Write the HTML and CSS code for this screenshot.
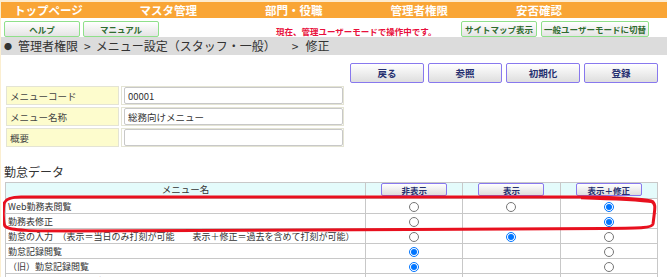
FILE: index.html
```html
<!DOCTYPE html>
<html lang="ja">
<head>
    <meta charset="UTF-8">
    <title>メニュー設定</title>
    <link rel="stylesheet" href="styles.css">
</head>
<body>
    <div id="page">
        <div class="topnav">
            <span>トップページ</span>
            <span>マスタ管理</span>
            <span>部門・役職</span>
            <span>管理者権限</span>
            <span>安否確認</span>
        </div>
        <div class="toolbar">
            <button class="green-btn">ヘルプ</button>
            <button class="green-btn">マニュアル</button>
            <span class="mode-note">現在、管理ユーザーモードで操作中です。</span>
            <div class="toolbar-right">
                <button class="green-btn">サイトマップ表示</button>
                <button class="green-btn wide">一般ユーザーモードに切替</button>
            </div>
        </div>
        <div class="breadcrumb">
            <span class="dot">●</span>管理者権限<span class="sep">&gt;</span>メニュー設定（スタッフ・一般）<span class="sep wide">&gt;</span>修正
        </div>

        <div class="actions">
            <button class="btn">戻る</button>
            <button class="btn">参照</button>
            <button class="btn">初期化</button>
            <button class="btn">登録</button>
        </div>

        <table class="form">
            <tr>
                <td class="label">メニューコード</td>
                <td class="field"><input type="text" value="00001"></td>
            </tr>
            <tr>
                <td class="label">メニュー名称</td>
                <td class="field"><input type="text" value="総務向けメニュー"></td>
            </tr>
            <tr>
                <td class="label">概要</td>
                <td class="field"><input type="text" value=""></td>
            </tr>
        </table>

        <h2 class="section">勤怠データ</h2>

        <div class="data-wrap">
            <table class="data">
                <tr class="head">
                    <th class="name">メニュー名</th>
                    <th><button class="btn small">非表示</button></th>
                    <th><button class="btn small">表示</button></th>
                    <th><button class="btn small">表示＋修正</button></th>
                </tr>
                <tr>
                    <td>Web勤務表閲覧</td>
                    <td><input type="radio" name="r1"></td>
                    <td><input type="radio" name="r1"></td>
                    <td><input type="radio" name="r1" checked></td>
                </tr>
                <tr>
                    <td>勤務表修正</td>
                    <td><input type="radio" name="r2"></td>
                    <td></td>
                    <td><input type="radio" name="r2" checked></td>
                </tr>
                <tr>
                    <td>勤怠の入力　（表示＝当日のみ打刻が可能　　表示＋修正＝過去を含めて打刻が可能）</td>
                    <td><input type="radio" name="r3"></td>
                    <td><input type="radio" name="r3" checked></td>
                    <td><input type="radio" name="r3"></td>
                </tr>
                <tr>
                    <td>勤怠記録閲覧</td>
                    <td><input type="radio" name="r4" checked></td>
                    <td></td>
                    <td><input type="radio" name="r4"></td>
                </tr>
                <tr>
                    <td>（旧）勤怠記録閲覧</td>
                    <td><input type="radio" name="r5" checked></td>
                    <td></td>
                    <td><input type="radio" name="r5"></td>
                </tr>
                <tr>
                    <td>　　　　　勤怠入力（打刻）</td>
                    <td><input type="radio" name="r6" checked></td>
                    <td></td>
                    <td><input type="radio" name="r6"></td>
                </tr>
            </table>

            <!-- 手書きの赤枠 -->
            <svg class="mark" width="660" height="45" viewBox="0 0 660 45">
                <path d="M18 3 L580 3 C610 3 640 5 648 7 C653 9 652 14 651 22 L650 30 C649 34 640 34 600 34.5 L70 37 C30 37 6 37 2 32 C0 28 0 16 1 10 C2 5 8 3 18 3 Z" fill="none" stroke="#e8101e" stroke-width="3" stroke-linejoin="round"/>
                <path d="M578 4 C610 5 635 6 651 8" fill="none" stroke="#e8101e" stroke-width="2.5"/>
            </svg>
        </div>
    </div>
</body>
</html>
```

FILE: styles.css
```css
body {
    margin: 0;
    font-family: "Noto Sans CJK JP", "Noto Sans", sans-serif;
    color: #333;
    background-color: #fff;
}
#page {
    width: 666px;
    height: 277px;
    overflow: hidden;
    border-left: 1px solid #fbeed0;
}
.topnav {
    display: flex;
    height: 16px;
    border-top: 2px solid #fdebcf;
    background-color: #f9a535;
}
.topnav span {
    width: 125.5px;
    flex: none;
    padding-left: 13px;
    box-sizing: border-box;
    color: #fff;
    font-size: 11.5px;
    font-weight: bold;
    line-height: 16px;
}
.toolbar {
    display: flex;
    align-items: flex-start;
    height: 19px;
    padding: 3px 18px 0 3px;
    box-sizing: border-box;
}
.green-btn {
    width: 76px;
    height: 16px;
    margin-right: 3px;
    padding: 0;
    border: 1px solid #8fe08a;
    border-radius: 2px;
    background: linear-gradient(#ffffff, #e4e4e4);
    color: #2f6b2f;
    font-family: inherit;
    font-size: 8.5px;
    font-weight: bold;
    line-height: 13px;
}
.green-btn.wide {
    width: 108px;
    margin-right: 0;
}
.mode-note {
    margin-left: 114px;
    padding-top: 5px;
    color: #e8103c;
    font-size: 8.5px;
    font-weight: bold;
    line-height: 10px;
}
.toolbar-right {
    display: flex;
    margin-left: auto;
    gap: 1px;
}
.breadcrumb {
    height: 18px;
    padding-left: 3px;
    background-color: #dcdcdc;
    font-size: 12px;
    line-height: 18px;
    color: #333;
    white-space: nowrap;
}
.breadcrumb .dot {
    font-size: 8px;
    margin-right: 6px;
    vertical-align: 1px;
}
.breadcrumb .sep {
    margin: 0 5px 0 6px;
}
.breadcrumb .sep.wide {
    margin: 0 7px 0 16px;
}
.actions {
    display: flex;
    justify-content: flex-end;
    gap: 4px;
    padding: 8px 9px 0 0;
}
.btn {
    width: 74px;
    height: 20px;
    padding: 0;
    border: 1px solid #8878ee;
    border-radius: 2px;
    background: linear-gradient(#ffffff, #dedede);
    color: #263070;
    font-family: inherit;
    font-size: 9.5px;
    font-weight: bold;
}
.btn.small {
    width: 66px;
    height: 13px;
    font-size: 8.5px;
    line-height: 10px;
    vertical-align: top;
}
.form {
    margin: 1px 0 0 3px;
    border-collapse: separate;
    border-spacing: 2px;
}
.form td {
    height: 19px;
    padding: 0;
    box-sizing: border-box;
    border: 1px solid #e4e4d4;
    font-size: 9.5px;
}
.form .label {
    width: 113px;
    padding-left: 3px;
    background-color: #fdfccd;
    color: #444;
}
.form .field {
    width: 223px;
    padding-left: 2px;
}
.form input {
    width: 219px;
    height: 17px;
    box-sizing: border-box;
    border: 1px solid #c8c8c8;
    border-radius: 2px;
    padding: 0 3px;
    font-family: inherit;
    font-size: 9.5px;
    color: #333;
    display: block;
}
.section {
    margin: 14px 0 0 3px;
    font-size: 12px;
    font-weight: normal;
    line-height: 18px;
    color: #333;
}
.data-wrap {
    position: relative;
    margin: 1px 0 0 4px;
}
.data {
    width: 653px;
    border-collapse: collapse;
    table-layout: fixed;
}
.data th,
.data td {
    height: 14px;
    padding: 0;
    border: 1px solid #c8c8c8;
    font-size: 9px;
    font-weight: normal;
    line-height: 13px;
    text-align: center;
}
.data .head th {
    height: 15px;
    background-color: #e4fbfb;
    vertical-align: top;
}
.data .name {
    width: 359px;
    font-size: 9.5px;
}
.data td:first-child {
    text-align: left;
    padding-left: 2px;
    white-space: nowrap;
    overflow: hidden;
}
.data input[type="radio"] {
    width: 10px;
    height: 10px;
    margin: 0;
    vertical-align: middle;
}
.mark {
    position: absolute;
    left: -2px;
    top: 12px;
    pointer-events: none;
}
```
